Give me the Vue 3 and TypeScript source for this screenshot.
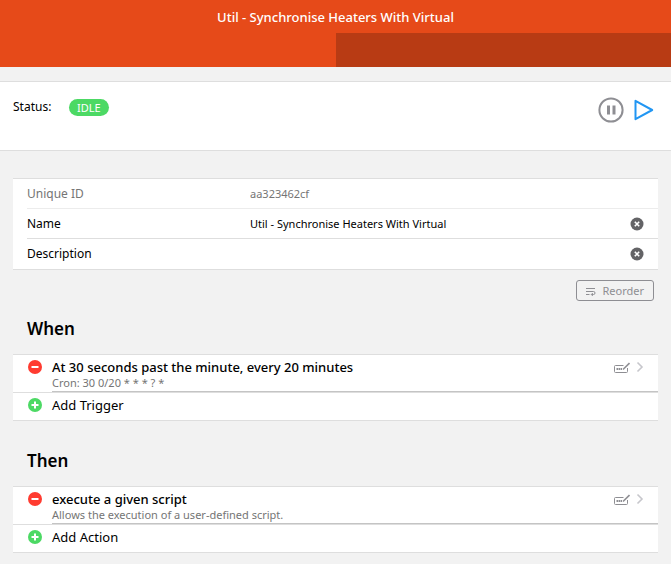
<script setup lang="ts">
import { reactive, ref } from 'vue'

interface RuleModule {
  title: string
  detail: string
}

interface RuleSection {
  heading: string
  addLabel: string
  modules: RuleModule[]
}

const rule = reactive({
  uid: 'aa323462cf',
  name: 'Util - Synchronise Heaters With Virtual',
  description: '',
})

const status = ref('IDLE')

const sections: RuleSection[] = [
  {
    heading: 'When',
    addLabel: 'Add Trigger',
    modules: [
      { title: 'At 30 seconds past the minute, every 20 minutes', detail: 'Cron: 30 0/20 * * * ? *' },
    ],
  },
  {
    heading: 'Then',
    addLabel: 'Add Action',
    modules: [
      { title: 'execute a given script', detail: 'Allows the execution of a user-defined script.' },
    ],
  },
]
</script>

<template>
  <div class="page">
    <header class="navbar">
      <h1 class="navbar-title">{{ rule.name }}</h1>
      <nav class="tabs" aria-label="Views">
        <button class="tab" type="button" aria-label="Design"></button>
        <button class="tab tab-shaded" type="button" aria-label="Code"></button>
      </nav>
    </header>

    <main>
      <section class="status">
        <span class="status-label">Status:</span>
        <span class="badge">{{ status }}</span>
        <div class="status-actions">
          <button class="icon-button" type="button" aria-label="Pause">
            <svg width="26" height="26" viewBox="0 0 26 26">
              <circle cx="13" cy="13" r="11.6" fill="none" stroke="#8e8e93" stroke-width="2" />
              <path d="M9 8.5h3v9H9zM14.5 8.5h3v9h-3z" fill="#8e8e93" />
            </svg>
          </button>
          <button class="icon-button" type="button" aria-label="Run now">
            <svg width="20" height="26" viewBox="0 0 20 26">
              <path d="M1.5 3.8v18.4L18.2 13z" fill="none" stroke="#2196f3" stroke-width="2" stroke-linejoin="round" />
            </svg>
          </button>
        </div>
      </section>

      <form class="list fields" @submit.prevent>
        <div class="field field-disabled">
          <label for="uid">Unique ID</label>
          <input id="uid" type="text" :value="rule.uid" disabled />
        </div>
        <div class="field">
          <label for="name">Name</label>
          <input id="name" v-model="rule.name" type="text" />
          <button class="clear" type="button" aria-label="Clear name" @click="rule.name = ''">
            <svg width="14" height="14" viewBox="0 0 14 14">
              <circle cx="7" cy="7" r="6.5" fill="#636366" />
              <path d="M4.8 4.8l4.4 4.4M9.2 4.8l-4.4 4.4" stroke="#fff" stroke-width="1.6" />
            </svg>
          </button>
        </div>
        <div class="field">
          <label for="description">Description</label>
          <input id="description" v-model="rule.description" type="text" />
          <button class="clear" type="button" aria-label="Clear description" @click="rule.description = ''">
            <svg width="14" height="14" viewBox="0 0 14 14">
              <circle cx="7" cy="7" r="6.5" fill="#636366" />
              <path d="M4.8 4.8l4.4 4.4M9.2 4.8l-4.4 4.4" stroke="#fff" stroke-width="1.6" />
            </svg>
          </button>
        </div>
      </form>

      <div class="toolbar">
        <button class="reorder" type="button">
          <svg width="10" height="10" viewBox="0 0 10 10" fill="none" stroke="#8e8e93">
            <path d="M0 2.5h9M0 5.5h7.5a1.5 1.5 0 0 1 0 3H5.5M0 8.500h3.500M6.800 7L5.300 8.500l1.500 1.500" />
          </svg>
          Reorder
        </button>
      </div>

      <section v-for="section in sections" :key="section.heading" class="block">
        <h2>{{ section.heading }}</h2>
        <div class="list">
          <div v-for="item in section.modules" :key="item.title" class="module">
            <button class="icon-button round" type="button" :aria-label="`Remove ${item.title}`">
              <svg width="14" height="14" viewBox="0 0 14 14">
                <circle cx="7" cy="7" r="7" fill="#ff3b30" />
                <path d="M3.5 7h7" stroke="#fff" stroke-width="2" />
              </svg>
            </button>
            <a class="module-link" href="#">
              <span class="module-text">
                <span class="module-title">{{ item.title }}</span>
                <span class="module-detail">{{ item.detail }}</span>
              </span>
              <svg class="edit" width="16" height="12" viewBox="0 0 16 12" fill="none" stroke="#8e8e93">
                <path d="M9.5 3.5H1.5a1 1 0 0 0-1 1v5a1 1 0 0 0 1 1h11a1 1 0 0 0 1-1V6" />
                <path d="M2.5 7h6" stroke-width="2" stroke-dasharray="1.5 .5" />
                <path d="M9 7.5L15.5 1" stroke-width="1.6" />
              </svg>
              <svg class="chevron" width="8" height="12" viewBox="0 0 8 12" fill="none" stroke="#c7c7cc" stroke-width="1.6">
                <path d="M1.5 1.5L6 6l-4.5 4.5" />
              </svg>
            </a>
          </div>
          <button class="add" type="button">
            <svg width="14" height="14" viewBox="0 0 14 14">
              <circle cx="7" cy="7" r="7" fill="#4cd964" />
              <path d="M3.5 7h7M7 3.5v7" stroke="#fff" stroke-width="2" />
            </svg>
            {{ section.addLabel }}
          </button>
        </div>
      </section>
    </main>
  </div>
</template>

<style>
body {
  background: #f2f2f2;
}
</style>

<style scoped>
.page {
  color: #000;
  font-family: "Segoe UI", "Noto Sans", "Open Sans", sans-serif;
  font-size: 12px;
  line-height: 16px;
}

.page * {
  box-sizing: border-box;
}

button {
  margin: 0;
  padding: 0;
  border: 0;
  background: none;
  color: inherit;
  font: inherit;
  cursor: pointer;
}

svg {
  display: block;
  flex: none;
}

.navbar {
  background: #e64a19;
  color: #fff;
}

.navbar-title {
  margin: 0;
  padding: 9px 16px 8px;
  font-size: 13px;
  font-weight: 500;
  line-height: 16px;
  text-align: center;
}

.tabs {
  display: grid;
  grid-template-columns: 1fr 1fr;
}

.tab {
  height: 34px;
}

.tab-shaded {
  background: #b83b14;
}

.status {
  display: flex;
  align-items: flex-start;
  min-height: 70px;
  margin-top: 14px;
  padding: 15px 17px 0 13px;
  border: solid #dedede;
  border-width: 1px 0;
  background: #fff;
}

.status-label {
  width: 56px;
  margin-top: 2px;
}

.badge {
  margin-top: 2px;
  padding: 0 8px;
  border-radius: 9px;
  background: #4cd964;
  color: #fff;
  font-size: 11px;
  line-height: 17px;
}

.status-actions {
  display: flex;
  gap: 10px;
  margin-left: auto;
}

.list {
  margin: 0 13px;
  border: solid #dedede;
  border-width: 1px 0;
  background: #fff;
}

.fields {
  margin-top: 27px;
  padding-left: 14px;
}

.field {
  display: flex;
  align-items: center;
  height: 30px;
  padding-right: 14px;
  border-bottom: 1px solid #dedede;
}

.field:last-child {
  border-bottom: 0;
}

.field-disabled {
  border-color: #ececec;
  color: #757575;
}

.field label {
  flex: 0 0 223px;
}

.field input {
  flex: 1;
  min-width: 0;
  height: 28px;
  padding: 0;
  border: 0;
  outline: 0;
  background: transparent;
  color: inherit;
  font: inherit;
  font-size: 11px;
}

.toolbar {
  display: flex;
  justify-content: flex-end;
  padding: 10px 17px 0;
}

.reorder {
  display: flex;
  align-items: center;
  gap: 6px;
  height: 21px;
  padding: 0 9px;
  border: 1px solid #8e8e93;
  border-radius: 3px;
  color: #8e8e93;
  font-size: 11px;
}

.block h2 {
  margin: 0;
  padding: 16px 27px 13px;
  font-size: 17px;
  font-weight: 600;
  line-height: 24px;
}

.block + .block {
  padding-top: 12px;
}

.module {
  display: flex;
  gap: 10px;
  padding-left: 15px;
  border-bottom: 1px solid #dedede;
}

.round {
  align-self: flex-start;
  margin-top: 5px;
}

.module-link {
  display: flex;
  flex: 1;
  padding: 3px 14px 1px 0;
  border-bottom: 1px solid #c4c4c4;
  color: inherit;
  text-decoration: none;
}

.module-text {
  display: flex;
  flex: 1;
  flex-direction: column;
}

.module-title {
  font-size: 13px;
  font-weight: 500;
  line-height: 18px;
}

.module-detail {
  color: #757575;
  font-size: 11px;
  line-height: 14px;
}

.edit {
  margin: 4px 6px 0 0;
}

.chevron {
  margin-top: 3px;
}

.add {
  display: flex;
  align-items: center;
  gap: 10px;
  width: 100%;
  height: 27px;
  padding: 0 15px 3px;
  font-size: 13px;
  text-align: left;
}
</style>
